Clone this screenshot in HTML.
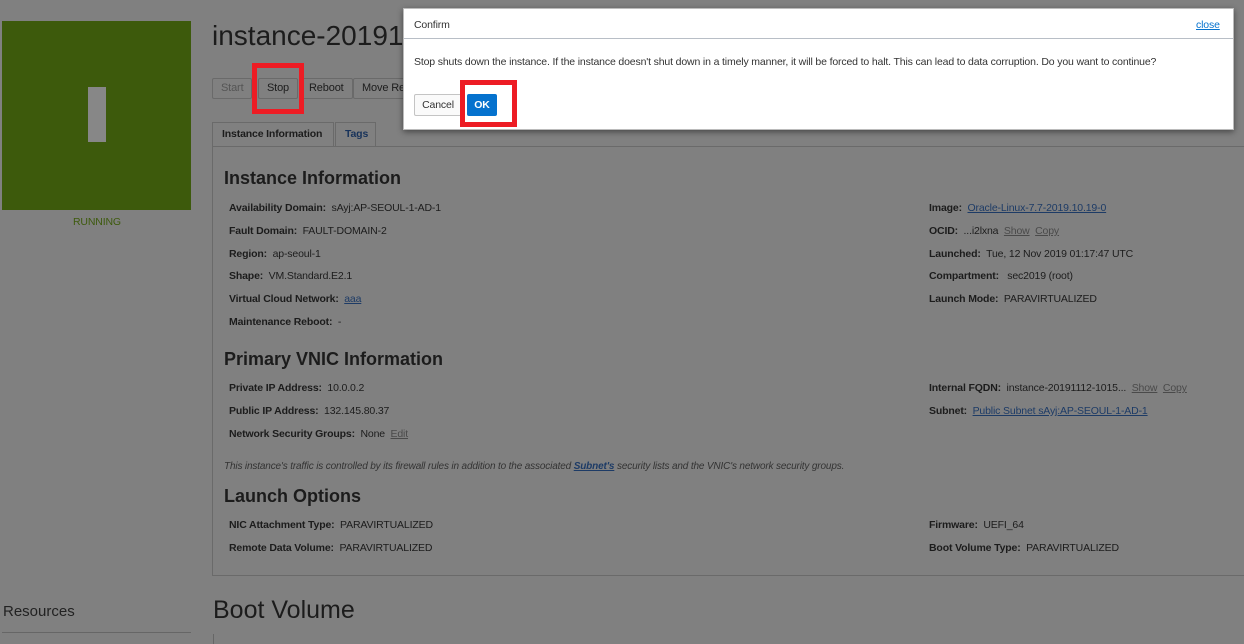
<!DOCTYPE html>
<html><head><meta charset="utf-8"><style>
*{margin:0;padding:0;box-sizing:border-box}
body{width:1244px;height:643px;overflow:hidden;background:#808080;font-family:"Liberation Sans",sans-serif;color:#1c1c1c;position:relative;font-size:10.5px;letter-spacing:-0.15px}
.a{position:absolute;white-space:nowrap}
.l{color:#1d3b66;text-decoration:underline}
.s{color:#4a4a4a;text-decoration:underline}
.btn{position:absolute;top:78px;height:21px;border:1px solid #6a6a6a;border-radius:2px;font-size:11px;line-height:19px;padding:0 8px;color:#1c1c1c;white-space:nowrap;overflow:hidden}
h2{position:absolute;font-size:18px;font-weight:bold;left:224px;white-space:nowrap;letter-spacing:0}
.red{position:absolute;border:5px solid #ed1c24}
</style></head><body>
<div class="a" style="left:2px;top:21px;width:189px;height:189px;background:#3d5a0c"></div>
<div class="a" style="left:88px;top:87px;width:18px;height:55px;background:#878787"></div>
<div class="a" style="left:73px;top:216px;color:#3d5a0c">RUNNING</div>
<div class="a" style="left:212px;top:20px;font-size:28px;color:#1c1c1c;letter-spacing:0">instance-20191112</div>
<div class="btn" style="left:212px;color:#555">Start</div>
<div class="btn" style="left:258px">Stop</div>
<div class="btn" style="left:300px">Reboot</div>
<div class="btn" style="left:353px;width:60px">Move Re</div>
<div class="a" style="left:212px;top:122px;width:122px;height:25px;border:1px solid #6a6a6a;border-bottom:none;font-weight:bold;padding:5px 9px">Instance Information</div>
<div class="a" style="left:335px;top:122px;width:41px;height:24px;border:1px solid #6a6a6a;border-bottom:none;font-weight:bold;color:#17325a;padding:5px 9px">Tags</div>
<div class="a" style="left:212px;top:146px;width:1040px;height:430px;border:1px solid #6a6a6a"></div>
<h2 style="top:168px">Instance Information</h2>
<div class="a" style="left:229px;top:202px"><b>Availability Domain:</b>&nbsp; sAyj:AP-SEOUL-1-AD-1</div>
<div class="a" style="left:229px;top:225px"><b>Fault Domain:</b>&nbsp; FAULT-DOMAIN-2</div>
<div class="a" style="left:229px;top:248px"><b>Region:</b>&nbsp; ap-seoul-1</div>
<div class="a" style="left:229px;top:270px"><b>Shape:</b>&nbsp; VM.Standard.E2.1</div>
<div class="a" style="left:229px;top:293px"><b>Virtual Cloud Network:</b>&nbsp; <span class="l">aaa</span></div>
<div class="a" style="left:229px;top:316px"><b>Maintenance Reboot:</b>&nbsp; -</div>
<div class="a" style="left:929px;top:202px"><b>Image:</b>&nbsp; <span class="l">Oracle-Linux-7.7-2019.10.19-0</span></div>
<div class="a" style="left:929px;top:225px"><b>OCID:</b>&nbsp; ...i2lxna&nbsp; <span class="s">Show</span>&nbsp; <span class="s">Copy</span></div>
<div class="a" style="left:929px;top:248px"><b>Launched:</b>&nbsp; Tue, 12 Nov 2019 01:17:47 UTC</div>
<div class="a" style="left:929px;top:270px"><b>Compartment:</b>&nbsp;&nbsp; sec2019 (root)</div>
<div class="a" style="left:929px;top:293px"><b>Launch Mode:</b>&nbsp; PARAVIRTUALIZED</div>
<h2 style="top:349px">Primary VNIC Information</h2>
<div class="a" style="left:229px;top:382px"><b>Private IP Address:</b>&nbsp; 10.0.0.2</div>
<div class="a" style="left:229px;top:405px"><b>Public IP Address:</b>&nbsp; 132.145.80.37</div>
<div class="a" style="left:229px;top:428px"><b>Network Security Groups:</b>&nbsp; None&nbsp; <span class="s">Edit</span></div>
<div class="a" style="left:929px;top:382px"><b>Internal FQDN:</b>&nbsp; instance-20191112-1015...&nbsp; <span class="s">Show</span>&nbsp; <span class="s">Copy</span></div>
<div class="a" style="left:929px;top:405px"><b>Subnet:</b>&nbsp; <span class="l">Public Subnet sAyj:AP-SEOUL-1-AD-1</span></div>
<div class="a" style="left:224px;top:461px;font-style:italic;font-size:10px;color:#333">This instance's traffic is controlled by its firewall rules in addition to the associated <span class="l" style="font-weight:bold">Subnet's</span> security lists and the VNIC's network security groups.</div>
<h2 style="top:486px">Launch Options</h2>
<div class="a" style="left:229px;top:519px"><b>NIC Attachment Type:</b>&nbsp; PARAVIRTUALIZED</div>
<div class="a" style="left:229px;top:542px"><b>Remote Data Volume:</b>&nbsp; PARAVIRTUALIZED</div>
<div class="a" style="left:929px;top:519px"><b>Firmware:</b>&nbsp; UEFI_64</div>
<div class="a" style="left:929px;top:542px"><b>Boot Volume Type:</b>&nbsp; PARAVIRTUALIZED</div>
<div class="a" style="left:3px;top:603px;font-size:15px;color:#222;letter-spacing:0">Resources</div>
<div class="a" style="left:2px;top:632px;width:189px;height:1px;background:#666"></div>
<div class="a" style="left:213px;top:596px;font-size:25px;color:#1c1c1c;letter-spacing:0">Boot Volume</div>
<div class="a" style="left:213px;top:634px;width:1px;height:10px;background:#666"></div>
<div class="a" style="left:403px;top:8px;width:831px;height:122px;background:#fff;box-shadow:0 2px 6px rgba(0,0,0,.45);border:1px solid #bbb"></div>
<div class="a" style="left:414px;top:19px;color:#333">Confirm</div>
<div class="a" style="left:1196px;top:19px;color:#0572ce;text-decoration:underline">close</div>
<div class="a" style="left:404px;top:38px;width:829px;height:1px;background:#b8bec6"></div>
<div class="a" style="left:414px;top:56px;color:#333">Stop shuts down the instance. If the instance doesn't shut down in a timely manner, it will be forced to halt. This can lead to data corruption. Do you want to continue?</div>
<div class="a" style="left:414px;top:94px;width:48px;height:22px;border:1px solid #c4c4c4;border-radius:2px;background:#fafafa;color:#333;line-height:20px;text-align:center">Cancel</div>
<div class="a" style="left:467px;top:94px;width:30px;height:22px;background:#0572ce;border-radius:2px;color:#fff;font-weight:bold;line-height:22px;text-align:center">OK</div>
<div class="red" style="left:252px;top:63px;width:52px;height:51px"></div>
<div class="red" style="left:460px;top:80px;width:57px;height:47px"></div>
</body></html>
